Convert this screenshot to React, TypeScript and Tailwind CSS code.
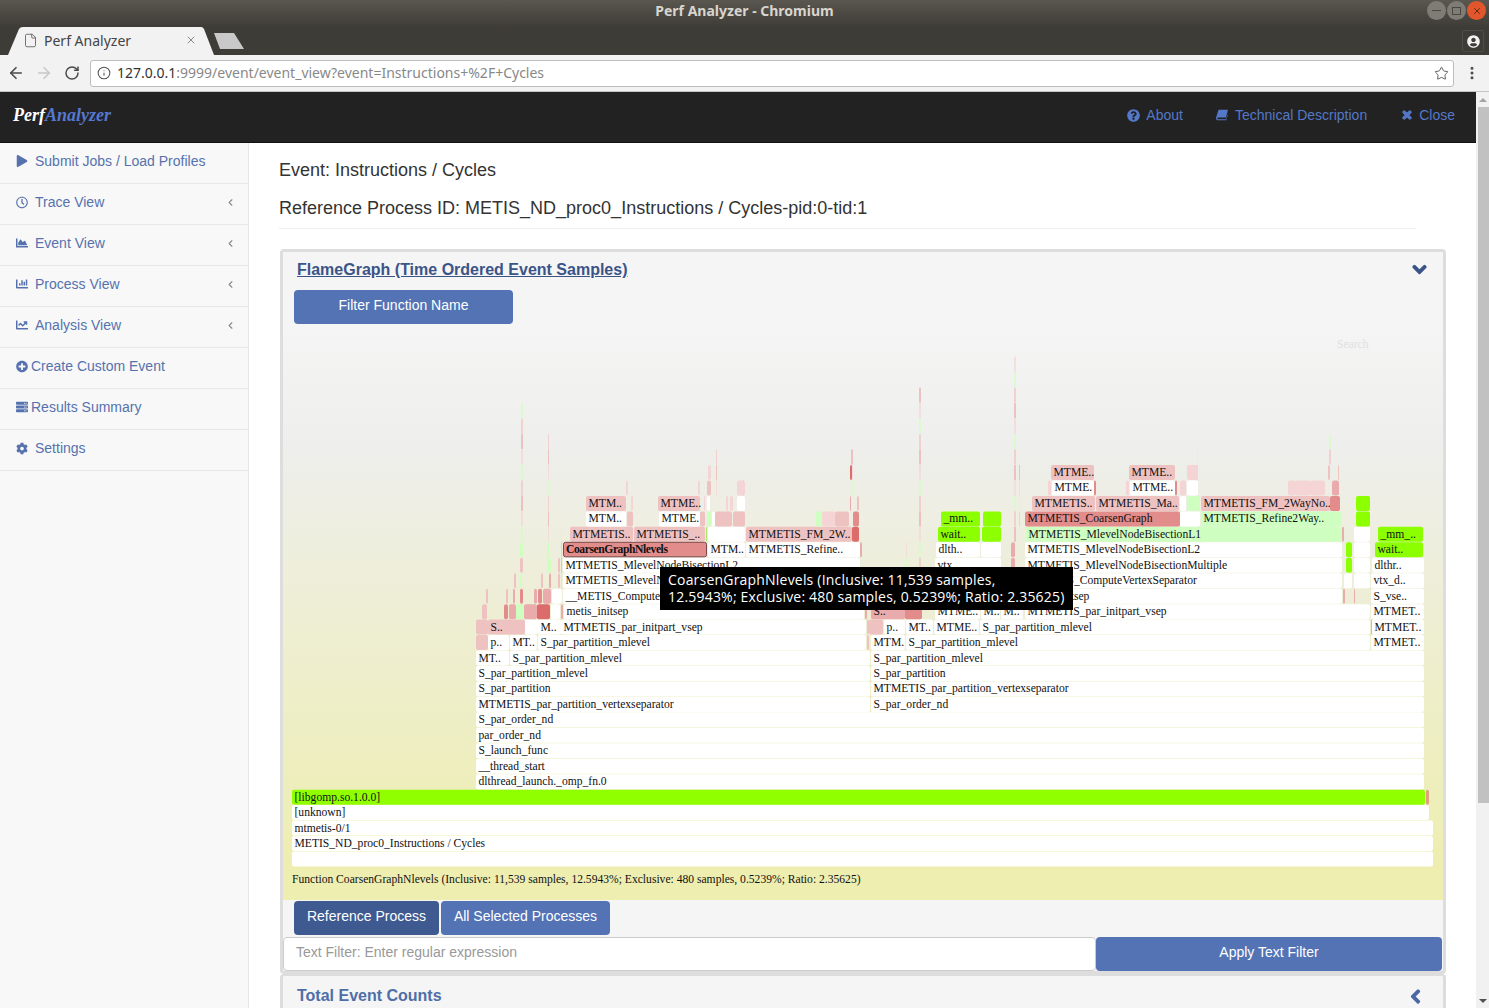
import { ArrowLeft, ArrowRight, ChevronLeft, File, Info, MoreVertical, RotateCw, Star, X } from "lucide-react";
import {
    FaChartArea,
    FaChartBar,
    FaChartLine,
    FaChevronDown,
    FaChevronLeft,
    FaCog,
    FaPlay,
    FaPlusCircle,
    FaQuestionCircle,
    FaRegClock,
    FaServer,
    FaTimes,
    FaUserCircle,
} from "react-icons/fa";

const W = "#ffffff";
const P0 = "#f4d4d4";
const P1 = "#efc2c2";
const P2 = "#e9abab";
const P3 = "#e28c8c";
const R = "#dc6c6c";
const LG = "#cfffc0";
const G = "#8cff00";

// row, x1, x2, fill, label
type Frame = [number, number, number, string, string?];

const frames: Frame[] = [
    [0, 292, 1433, W],
    [1, 292, 1433, W, "METIS_ND_proc0_Instructions / Cycles"],
    [2, 292, 1433, W, "mtmetis-0/1"],
    [3, 292, 1429, W, "[unknown]"],
    [4, 292, 1425, "#90ff00", "[libgomp.so.1.0.0]"],
    [4, 1426, 1429, "#e0a080"],
    [5, 476, 1424, W, "dlthread_launch._omp_fn.0"],
    [6, 476, 1424, W, "__thread_start"],
    [7, 476, 1424, W, "S_launch_func"],
    [8, 476, 1424, W, "par_order_nd"],
    [9, 476, 1424, W, "S_par_order_nd"],
    [10, 476, 870, W, "MTMETIS_par_partition_vertexseparator"],
    [10, 871, 1424, W, "S_par_order_nd"],
    [11, 476, 870, W, "S_par_partition"],
    [11, 871, 1424, W, "MTMETIS_par_partition_vertexseparator"],
    [12, 476, 870, W, "S_par_partition_mlevel"],
    [12, 871, 1424, W, "S_par_partition"],
    [13, 476, 509, W, "MT.."],
    [13, 510, 870, W, "S_par_partition_mlevel"],
    [13, 871, 1424, W, "S_par_partition_mlevel"],
    [14, 476, 488, P1],
    [14, 488, 509, W, "p.."],
    [14, 510, 537, W, "MT.."],
    [14, 538, 866, W, "S_par_partition_mlevel"],
    [14, 867, 869, P1],
    [14, 871, 905, W, "MTM."],
    [14, 906, 1370, W, "S_par_partition_mlevel"],
    [14, 1371, 1424, W, "MTMET.."],
    [15, 476, 488, P1],
    [15, 488, 525, P1, "S.."],
    [15, 525, 538, W],
    [15, 538, 561, W, "M.."],
    [15, 561, 866, W, "MTMETIS_par_initpart_vsep"],
    [15, 867, 869, P1],
    [15, 869, 883, P1],
    [15, 884, 905, W, "p.."],
    [15, 906, 933, W, "MT.."],
    [15, 934, 979, W, "MTME.."],
    [15, 980, 1370, W, "S_par_partition_mlevel"],
    [15, 1371, 1372, P2],
    [15, 1372, 1424, W, "MTMET.."],
    [16, 482, 487, P1],
    [16, 504, 508, P3],
    [16, 509, 516, P2],
    [16, 516, 523, LG],
    [16, 524, 537, P2],
    [16, 537, 550, R],
    [16, 551, 560, W],
    [16, 561, 563, P2],
    [16, 564, 864, W, "metis_initsep"],
    [16, 865, 867, P2],
    [16, 871, 905, P2, "S.."],
    [16, 905, 922, P3],
    [16, 935, 980, W, "MTME.."],
    [16, 981, 1000, W, "M.."],
    [16, 1001, 1023, W, "M.."],
    [16, 1025, 1370, W, "MTMETIS_par_initpart_vsep"],
    [16, 1371, 1424, W, "MTMET.."],
    [17, 486, 488, P1],
    [17, 506, 508, P1],
    [17, 513, 515, P2],
    [17, 520, 523, P3],
    [17, 534, 537, P2],
    [17, 538, 542, P3],
    [17, 543, 551, P2],
    [17, 552, 562, W],
    [17, 563, 860, W, "__METIS_ComputeVertexSeparator"],
    [17, 1025, 1342, W, "metis_initsep"],
    [17, 1343, 1345, P2],
    [17, 1354, 1355, P2],
    [17, 1371, 1424, W, "S_vse.."],
    [18, 514, 516, P1],
    [18, 520, 522, LG],
    [18, 541, 543, P1],
    [18, 549, 551, P2],
    [18, 558, 560, P1],
    [18, 563, 860, W, "MTMETIS_MlevelNodeBisectionMultiple"],
    [18, 1025, 1342, W, "__METIS_ComputeVertexSeparator"],
    [18, 1344, 1352, W],
    [18, 1354, 1370, W],
    [18, 1371, 1424, W, "vtx_d.."],
    [19, 520, 523, P1],
    [19, 547, 551, LG],
    [19, 558, 560, P1],
    [19, 563, 860, W, "MTMETIS_MlevelNodeBisectionL2"],
    [19, 935, 1001, W, "vtx .."],
    [19, 1011, 1015, P2],
    [19, 1025, 1342, W, "MTMETIS_MlevelNodeBisectionMultiple"],
    [19, 1346, 1352, G],
    [19, 1354, 1370, W],
    [19, 1372, 1424, W, "dlthr.."],
    [20, 520, 523, LG],
    [20, 547, 549, LG],
    [20, 708, 745, W, "MTM.."],
    [20, 746, 860, W, "MTMETIS_Refine.."],
    [20, 860, 862, P2],
    [20, 936, 980, W, "dlth.."],
    [20, 981, 1001, W],
    [20, 1011, 1015, P2],
    [20, 1025, 1342, W, "MTMETIS_MlevelNodeBisectionL2"],
    [20, 1346, 1352, G],
    [20, 1354, 1370, W],
    [20, 1375, 1423, G, "wait.."],
    [21, 570, 633, P1, "MTMETIS.."],
    [21, 634, 705, P1, "MTMETIS_.."],
    [21, 706, 707, "#a8e868"],
    [21, 708, 745, W],
    [21, 746, 852, P1, "MTMETIS_FM_2W.."],
    [21, 852, 859, R],
    [21, 938, 980, G, "wait.."],
    [21, 982, 1001, G],
    [21, 1026, 1342, LG, "MTMETIS_MlevelNodeBisectionL1"],
    [21, 1342, 1344, P2],
    [21, 1354, 1370, W],
    [21, 1378, 1423, G, "_mm_.."],
    [22, 586, 626, W, "MTM.."],
    [22, 627, 633, P1],
    [22, 659, 700, W, "MTME."],
    [22, 700, 705, P1],
    [22, 707, 711, LG],
    [22, 712, 715, W],
    [22, 715, 732, P1],
    [22, 733, 745, P1],
    [22, 816, 822, LG],
    [22, 822, 835, P0],
    [22, 835, 849, P1],
    [22, 853, 859, P3],
    [22, 941, 980, G, "_mm.."],
    [22, 983, 1001, G],
    [22, 1025, 1180, P3, "MTMETIS_CoarsenGraph"],
    [22, 1180, 1200, W],
    [22, 1201, 1341, LG, "MTMETIS_Refine2Way.."],
    [22, 1356, 1370, G],
    [23, 586, 626, P1, "MTM.."],
    [23, 631, 633, P0],
    [23, 658, 700, P1, "MTME.."],
    [23, 704, 705, P0],
    [23, 707, 710, W],
    [23, 726, 728, P0],
    [23, 730, 733, P0],
    [23, 737, 745, W],
    [23, 850, 851, P2],
    [23, 857, 859, P1],
    [23, 1032, 1095, P1, "MTMETIS.."],
    [23, 1096, 1179, P1, "MTMETIS_Ma.."],
    [23, 1180, 1186, W],
    [23, 1187, 1200, LG],
    [23, 1201, 1330, P1, "MTMETIS_FM_2WayNo.."],
    [23, 1330, 1340, P3],
    [23, 1356, 1370, G],
    [24, 626, 628, P0],
    [24, 698, 700, P0],
    [24, 707, 711, P1],
    [24, 737, 745, P0],
    [24, 1048, 1051, P0],
    [24, 1052, 1094, W, "MTME."],
    [24, 1094, 1096, P3],
    [24, 1126, 1129, P0],
    [24, 1130, 1175, W, "MTME.."],
    [24, 1175, 1177, P3],
    [24, 1180, 1186, P0],
    [24, 1187, 1198, W],
    [24, 1288, 1295, P0],
    [24, 1295, 1310, P0],
    [24, 1310, 1325, P0],
    [24, 1332, 1339, P2],
    [25, 1051, 1094, P1, "MTME.."],
    [25, 1129, 1175, P1, "MTME.."],
    [25, 1187, 1198, P0],
    [25, 708, 711, P0],
    [25, 850, 852, R],
    [25, 1328, 1330, P1],
    [25, 1338, 1339, P1],
];

// x, width, top row, bottom row
const spikes: [number, number, number, number][] = [
    [521, 2, 29, 21],
    [548, 1, 27, 21],
    [919, 2, 30, 19],
    [1014, 2, 32, 21],
    [1329, 2, 27, 26],
    [1019, 1, 25, 22],
    [561, 1, 21, 17],
    [716, 1, 26, 24],
    [851, 2, 26, 24],
    [743, 1, 24, 24],
    [906, 1, 20, 17],
    [1197, 1, 26, 25],
];

const rowTop = (row: number) => 851.5 - row * 15.46;

const FlameGraph = () => {
    const spikeColors = [P1, LG, P0, P2];
    return (
        <svg viewBox="283 336 1160 564" className="block h-[564px] w-[1160px]">
            <defs>
                <linearGradient id="flameBg" x1="0" y1="0" x2="0" y2="1">
                    <stop offset="0" stopColor="#f4f4f4" />
                    <stop offset="0.2" stopColor="#eeeeec" />
                    <stop offset="0.95" stopColor="#eeeeb0" />
                </linearGradient>
            </defs>
            <rect x="283" y="336" width="1160" height="564" fill="url(#flameBg)" />
            <text x="1337" y="348" fontSize="11.6" fill="#e0e0e0" fontFamily="'Liberation Serif', serif">
                Search
            </text>
            {spikes.map(([x, w, top, bottom]) =>
                Array.from({ length: top - bottom + 1 }, (_, i) => (
                    <rect
                        key={`${x}-${i}`}
                        x={x}
                        y={rowTop(top - i)}
                        width={w}
                        height={15}
                        fillOpacity={0.65}
                        fill={spikeColors[(i * 3 + x) % 4]}
                    />
                ))
            )}
            {frames.map(([row, x1, x2, fill, label], i) => (
                <g key={i}>
                    <rect x={x1} y={rowTop(row)} width={x2 - x1} height={15} rx={2} fill={fill} />
                    {label && (
                        <text
                            x={x1 + 2.5}
                            y={rowTop(row) + 11}
                            fontSize="11.6"
                            fill="#111"
                            fontFamily="'Liberation Serif', serif"
                        >
                            {label}
                        </text>
                    )}
                </g>
            ))}
            <rect x="563.5" y={rowTop(20)} width="143" height="14.5" rx="2" fill={P3} stroke="#7a4a4a" />
            <text
                x="566"
                y={rowTop(20) + 11}
                fontSize="11.6"
                fontWeight="bold"
                fill="#111"
                fontFamily="'Liberation Serif', serif"
                letterSpacing="-0.42"
            >
                CoarsenGraphNlevels
            </text>
            <text x="292" y="883" fontSize="11.6" fill="#111" fontFamily="'Liberation Serif', serif">
                Function CoarsenGraphNlevels (Inclusive: 11,539 samples, 12.5943%; Exclusive: 480 samples, 0.5239%; Ratio: 2.35625)
            </text>
        </svg>
    );
};

const BrowserChrome = () => (
    <div className="font-['Noto_Sans',sans-serif]">
        <div className="relative h-[55px] bg-gradient-to-b from-[#5a5650] to-[#3e3c37] to-50%">
            <div className="pt-[2px] text-center text-[14px] leading-[18px] font-bold text-[#d8d5ce]">
                Perf Analyzer - Chromium
            </div>
            <div className="absolute top-[1px] right-[3px] flex gap-[1px]">
                <div className="flex h-[19px] w-[19px] items-center justify-center rounded-full bg-[#7f7c75] text-[#4a4843]">
                    <div className="h-[1px] w-[9px] bg-[#4a4843]" />
                </div>
                <div className="flex h-[19px] w-[19px] items-center justify-center rounded-full bg-[#7f7c75]">
                    <div className="h-[8px] w-[9px] border border-[#4a4843]" />
                </div>
                <div className="flex h-[19px] w-[19px] items-center justify-center rounded-full bg-[#e2562b] text-[#4a2010]">
                    <X size={10} strokeWidth={2} />
                </div>
            </div>
            <div className="absolute right-0 bottom-0 left-[8px] flex items-end">
                <div className="relative h-[28px] w-[206px]">
                    <svg viewBox="0 0 206 28" className="absolute inset-0 h-full w-full">
                        <path d="M0 28 L11 2 Q12 0 15 0 L193 0 Q195 0 196 2 L206 28 Z" fill="#f2f2f2" />
                    </svg>
                    <div className="relative flex h-full items-center pb-[2px] pl-[15px] text-[#555]">
                        <File size={15} strokeWidth={1.3} />
                        <span className="ml-[6px] w-[141px] text-[14px] text-[#444]">Perf Analyzer</span>
                        <X size={12} strokeWidth={2} className="text-[#888]" />
                    </div>
                </div>
                <svg viewBox="0 0 33 16" className="mb-[6px] ml-[-2px] h-[16px] w-[33px]">
                    <path d="M2 0 L22 0 L32 16 L8 16 Z" fill="#c9c9c9" />
                </svg>
                <div className="mr-[5px] mb-[3px] ml-auto flex h-[22px] w-[22px] items-center justify-center rounded-[2px] border border-[#4f4d48] text-[#f2f2f2]">
                    <FaUserCircle size={13} />
                </div>
            </div>
        </div>
        <div className="flex h-[37px] items-center border-b border-[#c4c4c4] bg-[#f2f2f2] pl-[7px] text-[#4a4a4a]">
            <ArrowLeft size={18} strokeWidth={2.2} />
            <ArrowRight size={18} strokeWidth={2.2} className="ml-[10px] text-[#c8c8c8]" />
            <RotateCw size={16} strokeWidth={2.2} className="ml-[11px]" />
            <div className="ml-[10px] flex h-[27px] w-[1364px] items-center rounded-[3px] border border-[#bdbdbd] bg-white pr-[4px] pl-[6px]">
                <Info size={14} strokeWidth={1.8} className="text-[#555]" />
                <span className="ml-[6px] text-[14px] leading-none text-[#333]">127.0.0.1</span>
                <span className="text-[14px] leading-none text-[#888]">:9999/event/event_view?event=Instructions+%2F+Cycles</span>
                <Star size={15} strokeWidth={1.5} className="ml-auto text-[#555]" />
            </div>
            <MoreVertical size={16} strokeWidth={2.5} className="ml-[10px]" />
        </div>
    </div>
);

const Navbar = () => (
    <div className="flex h-[51px] items-center justify-between border-b border-[#111] bg-[#222222] pr-[21px] pb-[4px] pl-[13px]">
        <div className="font-['Liberation_Serif',serif] text-[18px] font-bold italic">
            <span className="text-white">Perf</span>
            <span className="text-[#5578d0]">Analyzer</span>
        </div>
        <div className="flex items-center text-[14px] text-[#5578c8]">
            <FaQuestionCircle size={13} />
            <span className="ml-[6px]">About</span>
            <svg viewBox="0 0 14 12" className="ml-[33px] h-[12px] w-[12px]" fill="currentColor">
                <path d="M3 0 H14 L11.6 9 H2.4 C1.2 9 1.2 11 2.4 11 H11.8 L13.4 5.4 L13.8 6 L12 12 H2 C0.2 12 -0.3 10 0.2 8.6 Z" />
            </svg>
            <span className="ml-[7px]">Technical Description</span>
            <FaTimes size={12} stroke="currentColor" strokeWidth={50} className="ml-[34px]" />
            <span className="ml-[6px]">Close</span>
        </div>
    </div>
);

const menu = [
    { label: "Submit Jobs / Load Profiles", icon: <FaPlay size={12} />, gap: "ml-[7px]", sub: false },
    { label: "Trace View", icon: <FaRegClock size={13} />, gap: "ml-[7px]", sub: true },
    { label: "Event View", icon: <FaChartArea size={16} />, gap: "ml-[7px]", sub: true },
    { label: "Process View", icon: <FaChartBar size={16} />, gap: "ml-[7px]", sub: true },
    { label: "Analysis View", icon: <FaChartLine size={16} />, gap: "ml-[7px]", sub: true },
    { label: "Create Custom Event", icon: <FaPlusCircle size={13} />, gap: "ml-[3px]", sub: false },
    { label: "Results Summary", icon: <FaServer size={14} />, gap: "ml-[3px]", sub: false },
    { label: "Settings", icon: <FaCog size={13} />, gap: "ml-[7px]", sub: false },
];

const Sidebar = () => (
    <div className="h-full w-[249px] shrink-0 border-r border-[#e7e7e7] bg-[#f8f8f8]">
        {menu.map((item) => (
            <div
                key={item.label}
                className="flex h-[41px] items-center border-b border-[#e7e7e7] pr-[12px] pb-[4px] pl-[16px] text-[14px] text-[#5672ae]"
            >
                <span className="flex w-[12px] justify-center">{item.icon}</span>
                <span className={item.gap}>{item.label}</span>
                {item.sub && <ChevronLeft size={11} strokeWidth={2.5} className="ml-auto text-[#8a8a8a]" />}
            </div>
        ))}
    </div>
);

const Scrollbar = () => (
    <div className="flex h-full w-[13px] shrink-0 flex-col items-center bg-[#f1f1f1]">
        <div className="mt-[6px] h-0 w-0 border-x-[4px] border-b-[4px] border-x-transparent border-b-[#a3a3a3]" />
        <div className="mt-[5px] h-[696px] w-[11px] self-end bg-[#c1c1c1]" />
        <div className="mt-[196px] h-0 w-0 border-x-[4px] border-t-[4px] border-x-transparent border-t-[#505050]" />
    </div>
);

const Content = () => (
    <div className="h-full min-w-0 flex-1 overflow-hidden bg-white pl-[30px] font-['Liberation_Sans',sans-serif] text-[#333]">
        <div className="w-[1137px] border-b border-[#eeeeee] pt-[16px] pb-[9px] text-[18px] leading-[22px]">
            <div>Event: Instructions / Cycles</div>
            <div className="mt-[16px]">Reference Process ID: METIS_ND_proc0_Instructions / Cycles-pid:0-tid:1</div>
        </div>
        <div className="mt-[20px] ml-[1px] w-[1166px] rounded-[4px] border-[3px] border-[#dddddd] bg-[#f5f5f5]">
            <div className="flex h-[38px] items-center justify-between pr-[16px] pb-[2px] pl-[14px]">
                <span className="text-[16px] font-bold text-[#3b5488] underline">FlameGraph (Time Ordered Event Samples)</span>
                <FaChevronDown size={15} stroke="currentColor" strokeWidth={50} className="mb-[2px] text-[#3b5488]" />
            </div>
            <button className="ml-[11px] block h-[34px] w-[219px] rounded-[4px] bg-[#5373b5] pb-[4px] text-[14px] text-white">
                Filter Function Name
            </button>
            <div className="relative mt-[12px]">
                <FlameGraph />
                <div className="absolute top-[231px] left-[377px] h-[43px] w-[413px] bg-black px-[8px] py-[4px] font-['Open_Sans',sans-serif] text-[14px] leading-[17px] tracking-[0.2px] whitespace-nowrap text-white">
                    CoarsenGraphNlevels (Inclusive: 11,539 samples,
                    <br />
                    12.5943%; Exclusive: 480 samples, 0.5239%; Ratio: 2.35625)
                </div>
            </div>
            <div className="mt-[1px] ml-[11px] flex gap-[2px]">
                <button className="h-[34px] w-[145px] rounded-[4px] bg-[#3e5a90] pb-[4px] text-[14px] text-white">Reference Process</button>
                <button className="h-[34px] w-[169px] rounded-[4px] bg-[#5373b5] pb-[4px] text-[14px] text-white">All Selected Processes</button>
            </div>
            <div className="mt-[2px] flex h-[34px]">
                <div className="flex w-[813px] items-center rounded-[4px] border border-[#cccccc] bg-white pb-[4px] pl-[12px] text-[14px] text-[#999]">
                    Text Filter: Enter regular expression
                </div>
                <button className="h-[34px] w-[346px] rounded-[4px] bg-[#5373b5] pb-[4px] text-[14px] text-white">Apply Text Filter</button>
            </div>
        </div>
        <div className="ml-[1px] flex h-[60px] w-[1166px] items-start justify-between rounded-t-[4px] border-x-[3px] border-t-[2px] border-[#dddddd] bg-[#f5f5f5] pt-[11px] pr-[20px] pl-[14px]">
            <span className="text-[16px] leading-[18px] font-bold text-[#4f6ea8]">Total Event Counts</span>
            <FaChevronLeft size={15} stroke="currentColor" strokeWidth={50} className="mt-[2px] text-[#4a68a6]" />
        </div>
    </div>
);

export default function App() {
    return (
        <div className="flex h-[1008px] w-[1489px] flex-col overflow-hidden bg-white">
            <BrowserChrome />
            <div className="flex min-h-0 flex-1">
                <div className="flex h-full w-[1476px] flex-col font-['Liberation_Sans',sans-serif]">
                    <Navbar />
                    <div className="flex min-h-0 flex-1">
                        <Sidebar />
                        <Content />
                    </div>
                </div>
                <Scrollbar />
            </div>
        </div>
    );
}
